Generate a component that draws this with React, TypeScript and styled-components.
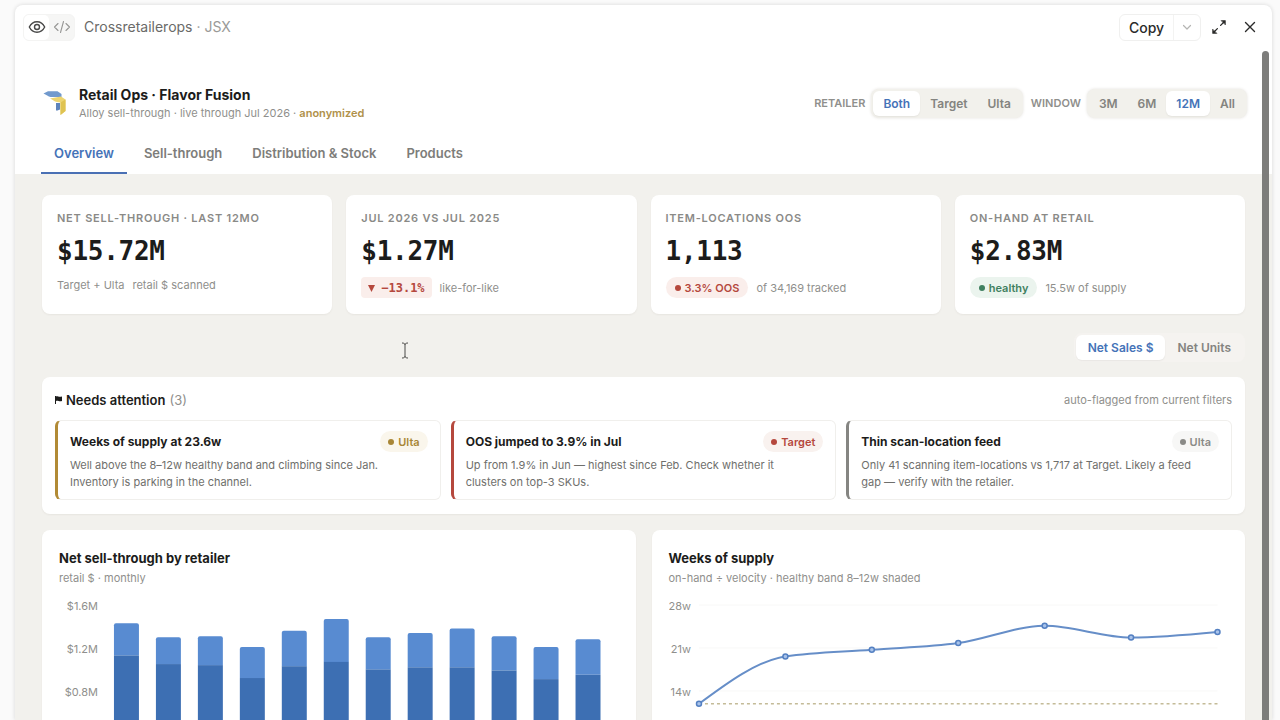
import React from "react";
import styled, { createGlobalStyle, css } from "styled-components";

const SANS = `Inter, "Liberation Sans", sans-serif`;
const MONO = `"DejaVu Sans Mono", "Liberation Mono", monospace`;

const GlobalStyle = createGlobalStyle`
  *, *::before, *::after { box-sizing: border-box; }
  body { margin: 0; background: #fafafa; color: #1c1c1b; font-family: ${SANS}; }
  button { font-family: inherit; border: 0; padding: 0; background: none; cursor: pointer; }
  h1, h2, h3, p { margin: 0; }
`;

const Page = styled.div`
  height: 100vh;
  padding: 5px 8px 0 15px;
  overflow: hidden;
`;

const Window = styled.div`
  position: relative;
  height: 100%;
  display: flex;
  flex-direction: column;
  background: #fff;
  border-radius: 8px 8px 0 0;
  box-shadow: 0 0 4px rgba(0, 0, 0, 0.14);
  overflow: hidden;
`;

const Toolbar = styled.div`
  flex: none;
  display: flex;
  align-items: center;
  height: 44px;
  padding: 0 12px 0 8px;
`;

const ViewToggle = styled.div`
  display: flex;
  align-items: center;
  height: 27px;
  width: 52px;
  border-radius: 6px;
  background: #f6f6f5;
  border: 1px solid #f4f4f3;
`;

const ViewButton = styled.button<{ $active?: boolean }>`
  flex: 1;
  display: flex;
  align-items: center;
  justify-content: center;
  height: 25px;
  border-radius: 5px;
  color: ${(p) => (p.$active ? "#4a4a49" : "#979795")};
  background: ${(p) => (p.$active ? "#fff" : "transparent")};
`;

const FileName = styled.div`
  flex: 1;
  margin-left: 9px;
  font-size: 14px;
  line-height: 20px;
  color: #6a6a68;
  span { color: #9a9a98; }
`;

const CopyGroup = styled.div`
  display: flex;
  height: 27px;
  border: 1px solid #f0f0ef;
  border-radius: 6px;
`;

const CopyButton = styled.button`
  width: 53px;
  font-size: 14px;
  font-weight: 500;
  color: #2b2b2a;
`;

const CopyMenu = styled.button`
  display: flex;
  align-items: center;
  justify-content: center;
  width: 27px;
  border-left: 1px solid #f3f3f2;
  color: #b5b5b3;
`;

const IconButton = styled.button`
  display: flex;
  align-items: center;
  justify-content: center;
  width: 20px;
  height: 24px;
  margin-left: 8px;
  color: #2b2b2a;
  & + & { margin-left: 11px; }
`;

const Scroller = styled.div`
  flex: 1;
  min-height: 0;
  overflow-y: auto;
  scrollbar-width: none;
`;

const ScrollThumb = styled.div`
  position: absolute;
  top: 46px;
  right: 3px;
  bottom: 0;
  width: 7px;
  border-radius: 4px 4px 0 0;
  background: #7d7d7b;
`;

const Header = styled.header`
  padding: 37px 25px 0 27px;
  background: #fff;
`;

const HeaderRow = styled.div`
  display: flex;
  align-items: center;
  justify-content: space-between;
  height: 34px;
`;

const Brand = styled.div`
  display: flex;
  align-items: center;
  gap: 12px;
`;

const BrandTitle = styled.h1`
  font-size: 14px;
  line-height: 20px;
  font-weight: 700;
`;

const BrandSub = styled.p`
  font-size: 11px;
  line-height: 16px;
  color: #8f8f8c;
  strong { font-weight: 600; color: #b0914a; }
`;

const Filters = styled.div`
  display: flex;
  align-items: center;
  gap: 8px;
`;

const Filter = styled.div`
  display: flex;
  align-items: center;
  gap: 6px;
`;

const FilterLabel = styled.span`
  font-size: 11px;
  font-weight: 600;
  color: #8f8f8c;
`;

const Segmented = styled.div`
  display: flex;
  padding: 2px;
  border-radius: 8px;
  background: #f2f1ec;
  box-shadow: 0 0 3px rgba(80, 70, 40, 0.16);
`;

const Segment = styled.button<{ $active?: boolean; $wide?: boolean }>`
  height: 25px;
  padding: 0 ${(p) => (p.$wide ? 12 : 10)}px;
  border-radius: 6px;
  font-size: 12px;
  font-weight: 600;
  color: #848480;
  ${(p) =>
    p.$active &&
    css`
      color: #4573b8;
      background: #fff;
      box-shadow: 0 1px 2px rgba(0, 0, 0, 0.06);
    `}
`;

const Tabs = styled.nav`
  display: flex;
  gap: 4px;
  margin: 12px -1px 0;
`;

const Tab = styled.button<{ $active?: boolean }>`
  height: 42px;
  padding: 2px 13px 0;
  font-size: 13px;
  font-weight: 600;
  color: ${(p) => (p.$active ? "#4573b8" : "#7d7d7a")};
  border-bottom: 2px solid ${(p) => (p.$active ? "#4a70b4" : "transparent")};
`;

const Body = styled.main`
  display: flex;
  flex-direction: column;
  padding: 21px 27px 24px;
  background: #f2f1ed;
`;

const Card = styled.section`
  background: #fff;
  border-radius: 8px;
  box-shadow: 0 1px 2px rgba(60, 50, 30, 0.06);
`;

const KpiGrid = styled.div`
  display: grid;
  grid-template-columns: repeat(4, 1fr);
  gap: 14px;
`;

const KpiCard = styled(Card)`
  min-height: 119px;
  padding: 15px;
`;

const KpiLabel = styled.h2`
  font-size: 11px;
  line-height: 16px;
  font-weight: 600;
  letter-spacing: 0.07em;
  text-transform: uppercase;
  color: #8a8a87;
`;

const KpiValue = styled.p`
  margin-top: 7px;
  font-family: ${MONO};
  font-size: 26px;
  line-height: 36px;
  font-weight: 700;
  letter-spacing: -0.01em;
`;

const KpiFoot = styled.div`
  display: flex;
  align-items: center;
  gap: 8px;
  margin-top: 8px;
  font-size: 11px;
  line-height: 16px;
  color: #8f8f8c;
`;

const tones = {
  red: { fg: "#b5483d", bg: "#faeeeb" },
  green: { fg: "#3f8060", bg: "#ebf4ee" },
  gold: { fg: "#a88636", bg: "#faf6ec" },
  rose: { fg: "#b5483d", bg: "#f9f2ef" },
  grey: { fg: "#8a8a87", bg: "#f7f7f6" },
};
type Tone = keyof typeof tones;

const Pill = styled.span<{ $tone: Tone }>`
  flex: none;
  display: inline-flex;
  align-items: center;
  gap: 4px;
  height: 21px;
  padding: 0 8px;
  border-radius: 11px;
  font-size: 11px;
  font-weight: 600;
  color: ${(p) => tones[p.$tone].fg};
  background: ${(p) => tones[p.$tone].bg};
  &::before {
    content: "";
    width: 6px;
    height: 6px;
    border-radius: 50%;
    background: currentColor;
  }
`;

const KpiPill = styled(Pill)`
  padding: 0 9px;
`;

const DeltaPill = styled.span`
  display: inline-flex;
  align-items: center;
  gap: 6px;
  height: 21px;
  padding: 0 7px;
  border-radius: 4px;
  font-family: ${MONO};
  font-size: 12px;
  font-weight: 700;
  color: ${tones.red.fg};
  background: ${tones.red.bg};
`;

const MeasureRow = styled.div`
  display: flex;
  justify-content: flex-end;
  margin: 19px 0 15px;
`;

const MeasureToggle = styled(Segmented)`
  background: #f5f3f0;
  box-shadow: none;
`;

const Attention = styled(Card)`
  padding: 13px 13px 14px;
`;

const AttentionHead = styled.div`
  display: flex;
  align-items: center;
  justify-content: space-between;
  height: 19px;
  font-size: 11px;
  color: #8f8f8c;
`;

const AttentionTitle = styled.h2`
  display: flex;
  align-items: center;
  gap: 4px;
  font-size: 13px;
  font-weight: 600;
  color: #1c1c1b;
  span { font-weight: 400; color: #8f8f8c; }
`;

const AlertGrid = styled.div`
  display: grid;
  grid-template-columns: repeat(3, 1fr);
  gap: 10px;
  margin-top: 11px;
`;

const Alert = styled.article<{ $edge: string }>`
  padding: 10px 12px 8px;
  border: 1px solid #f0efec;
  border-left: 3px solid ${(p) => p.$edge};
  border-radius: 6px;
`;

const AlertHead = styled.div`
  display: flex;
  align-items: center;
  justify-content: space-between;
`;

const AlertTitle = styled.h3`
  font-size: 12px;
  font-weight: 700;
`;

const AlertText = styled.p`
  max-width: 332px;
  margin-top: 5px;
  font-size: 11px;
  line-height: 17px;
  color: #6f6f6c;
`;

const ChartGrid = styled.div`
  display: grid;
  grid-template-columns: repeat(2, 1fr);
  gap: 16px;
  margin-top: 16px;
`;

const ChartCard = styled(Card)`
  padding: 18px 17px;
`;

const ChartTitle = styled.h2`
  font-size: 13px;
  line-height: 20px;
  font-weight: 700;
`;

const ChartSub = styled.p`
  margin-top: 2px;
  font-size: 11px;
  line-height: 16px;
  color: #8f8f8c;
`;

const ChartSvg = styled.svg`
  display: block;
  width: 100%;
  height: auto;
  margin-top: 11px;
  text {
    font-family: ${SANS};
    font-size: 11px;
    fill: #8f8f8c;
  }
`;

const TextCursor = styled.svg`
  position: absolute;
  left: 386px;
  top: 337px;
`;

const GRID_TOP = 8;
const GRID_STEP = 43;
const GRID_BASE = GRID_TOP + GRID_STEP * 4;

/* Monthly totals and the Target share, in $M. */
const sales = [
  [1.43, 1.13], [1.3, 1.05], [1.31, 1.04], [1.21, 0.92], [1.36, 1.03], [1.47, 1.07],
  [1.3, 1.0], [1.34, 1.02], [1.38, 1.02], [1.31, 0.99], [1.21, 0.91], [1.28, 0.95],
];

const supply = [11.9, 19.6, 20.7, 21.8, 24.6, 22.7, 23.6];

const yMoney = (v: number) => GRID_BASE - (v / 1.6) * GRID_STEP * 4;
const yWeeks = (v: number) => GRID_BASE - (v / 28) * GRID_STEP * 4;

/* Monotone cubic through evenly spaced points. */
function smoothPath(pts: number[][]) {
  const n = pts.length;
  const dx = pts[1][0] - pts[0][0];
  const slopes = pts.slice(1).map((p, i) => (p[1] - pts[i][1]) / dx);
  const tangents = pts.map((_, i) => {
    if (i === 0 || i === n - 1) return 0;
    const a = slopes[i - 1];
    const b = slopes[i];
    return a * b <= 0 ? 0 : Math.sign(a) * Math.min(Math.abs(a), Math.abs(b), Math.abs(a + b) / 4) * 2;
  });
  tangents[0] = (3 * slopes[0] - tangents[1]) / 2;
  tangents[n - 1] = (3 * slopes[n - 2] - tangents[n - 2]) / 2;
  return pts.slice(1).reduce((d, p, i) => {
    const q = pts[i];
    return `${d} C${q[0] + dx / 3},${q[1] + (tangents[i] * dx) / 3} ${p[0] - dx / 3},${p[1] - (tangents[i + 1] * dx) / 3} ${p[0]},${p[1]}`;
  }, `M${pts[0][0]},${pts[0][1]}`);
}

function SalesChart() {
  return (
    <ChartSvg viewBox="0 0 560 200" role="img" aria-label="Net sell-through by retailer">
      {["$1.6M", "$1.2M", "$0.8M"].map((t, i) => (
        <text key={t} x={39} y={GRID_TOP + i * GRID_STEP + 5} textAnchor="end">{t}</text>
      ))}
      {sales.map(([total, target], i) => {
        const x = 55 + i * 42;
        const top = yMoney(total);
        const split = yMoney(target);
        return (
          <g key={i}>
            <path d={`M${x},${split} V${top + 2} q0,-2 2,-2 h21 q2,0 2,2 V${split} Z`} fill="#588bd1" />
            <rect x={x} y={split} width={25} height={GRID_BASE - split} fill="#3d6fb3" />
          </g>
        );
      })}
    </ChartSvg>
  );
}

function SupplyChart() {
  const pts = supply.map((v, i) => [30 + i * (519 / 6), yWeeks(v)]);
  return (
    <ChartSvg viewBox="0 0 560 200" role="img" aria-label="Weeks of supply">
      {["28w", "21w", "14w"].map((t, i) => (
        <g key={t}>
          <line x1={30} x2={549} y1={GRID_TOP + i * GRID_STEP} y2={GRID_TOP + i * GRID_STEP} stroke="#f8f8f7" />
          <text x={22} y={GRID_TOP + i * GRID_STEP + 5} textAnchor="end">{t}</text>
        </g>
      ))}
      <line x1={30} x2={549} y1={yWeeks(11.9)} y2={yWeeks(11.9)} stroke="#c4bb98" strokeWidth={1.5} strokeDasharray="3 3" />
      <path d={smoothPath(pts)} fill="none" stroke="#668ec8" strokeWidth={2} />
      {pts.map(([x, y]) => (
        <circle key={x} cx={x} cy={y} r={2.5} fill="#a9c3ea" stroke="#5480c2" strokeWidth={1.5} />
      ))}
    </ChartSvg>
  );
}

const stroke = {
  fill: "none",
  stroke: "currentColor",
  strokeWidth: 1.4,
  strokeLinecap: "round",
  strokeLinejoin: "round",
} as const;

const EyeIcon = () => (
  <svg width="18" height="18" viewBox="0 0 18 18" {...stroke}>
    <path d="M1.3 9C3 5.6 5.7 3.8 9 3.8S15 5.6 16.7 9C15 12.4 12.3 14.2 9 14.2S3 12.4 1.3 9Z" />
    <circle cx="9" cy="9" r="2.5" />
  </svg>
);

const CodeIcon = () => (
  <svg width="18" height="18" viewBox="0 0 18 18" {...stroke} strokeWidth={1.1}>
    <path d="M5 5.5 1.5 9 5 12.5M13 5.5 16.5 9 13 12.5M10.5 3.5 7.5 14.5" />
  </svg>
);

const ChevronIcon = () => (
  <svg width="10" height="10" viewBox="0 0 10 10" {...stroke} strokeWidth={1.2}>
    <path d="M1.5 3.5 5 7 8.5 3.5" />
  </svg>
);

const ExpandIcon = () => (
  <svg width="16" height="16" viewBox="0 0 16 16" {...stroke} strokeWidth={1.3}>
    <path d="M9.6 6.4 13 3M6.4 9.6 3 13" />
    <path d="M10.4 1.600H14.400V5.600ZM5.600 14.400H1.600V10.400Z" fill="currentColor" strokeWidth={0.6} />
  </svg>
);

const CloseIcon = () => (
  <svg width="12" height="12" viewBox="0 0 12 12" {...stroke}>
    <path d="M1.5 1.5 10.5 10.5M10.5 1.5 1.5 10.5" />
  </svg>
);

const BrandMark = () => (
  <svg width="25" height="28" viewBox="0 0 25 28">
    <path d="M1.5 4.5 6 2.2H15.5L19.500 5V8H8.500C6.500 7.500 4 5.500 1.500 4.500Z" fill="#7199cd" />
    <path d="M8 9.500 19 7.500 23.500 10.500V22L18.500 26V13.500L15 13C12 12.500 11 10.500 8 9.500Z" fill="#ecd470" />
    <path d="M18.500 13.500 23.500 10.500V22L18.500 26Z" fill="#dfc352" />
    <path d="M14 14H18V20.500L15.500 21.500H14Z" fill="#5d83bb" />
  </svg>
);

const FlagIcon = () => (
  <svg width="7" height="9" viewBox="0 0 7 9" fill="#1c1c1b">
    <path d="M0 1H1V9H0ZM1 1.500C2.500 .8 3.500 2.400 7 1.600V6C4 6.800 3 5.200 1 6Z" />
  </svg>
);

const DownIcon = () => (
  <svg width="7" height="8" viewBox="0 0 7 8" fill="currentColor">
    <path d="M0 1H7L3.500 8Z" />
  </svg>
);

const kpis: { label: string; value: string; foot: React.ReactNode }[] = [
  { label: "Net sell-through · last 12mo", value: "$15.72M", foot: <><span>Target + Ulta</span><span>retail $ scanned</span></> },
  { label: "Jul 2026 vs Jul 2025", value: "$1.27M", foot: <><DeltaPill><DownIcon />−13.1%</DeltaPill><span>like-for-like</span></> },
  { label: "Item-locations OOS", value: "1,113", foot: <><KpiPill $tone="red">3.3% OOS</KpiPill><span>of 34,169 tracked</span></> },
  { label: "On-hand at retail", value: "$2.83M", foot: <><KpiPill $tone="green">healthy</KpiPill><span>15.5w of supply</span></> },
];

const alerts: { title: string; tag: string; tone: Tone; edge: string; text: string }[] = [
  { title: "Weeks of supply at 23.6w", tag: "Ulta", tone: "gold", edge: "#b18a35", text: "Well above the 8–12w healthy band and climbing since Jan. Inventory is parking in the channel." },
  { title: "OOS jumped to 3.9% in Jul", tag: "Target", tone: "rose", edge: "#b5483d", text: "Up from 1.9% in Jun — highest since Feb. Check whether it clusters on top-3 SKUs." },
  { title: "Thin scan-location feed", tag: "Ulta", tone: "grey", edge: "#858582", text: "Only 41 scanning item-locations vs 1,717 at Target. Likely a feed gap — verify with the retailer." },
];

export default function App() {
  return (
    <Page>
      <GlobalStyle />
      <Window>
        <Toolbar>
          <ViewToggle>
            <ViewButton $active aria-label="Preview"><EyeIcon /></ViewButton>
            <ViewButton aria-label="Code"><CodeIcon /></ViewButton>
          </ViewToggle>
          <FileName>Crossretailerops <span>· JSX</span></FileName>
          <CopyGroup>
            <CopyButton>Copy</CopyButton>
            <CopyMenu aria-label="More copy options"><ChevronIcon /></CopyMenu>
          </CopyGroup>
          <IconButton aria-label="Expand"><ExpandIcon /></IconButton>
          <IconButton aria-label="Close"><CloseIcon /></IconButton>
        </Toolbar>
        <Scroller>
          <Header>
            <HeaderRow>
              <Brand>
                <BrandMark />
                <div>
                  <BrandTitle>Retail Ops · Flavor Fusion</BrandTitle>
                  <BrandSub>Alloy sell-through · live through Jul 2026 · <strong>anonymized</strong></BrandSub>
                </div>
              </Brand>
              <Filters>
                <Filter>
                  <FilterLabel id="retailer">RETAILER</FilterLabel>
                  <Segmented role="group" aria-labelledby="retailer">
                    <Segment $active>Both</Segment>
                    <Segment>Target</Segment>
                    <Segment>Ulta</Segment>
                  </Segmented>
                </Filter>
                <Filter>
                  <FilterLabel id="window">WINDOW</FilterLabel>
                  <Segmented role="group" aria-labelledby="window">
                    <Segment>3M</Segment>
                    <Segment>6M</Segment>
                    <Segment $active>12M</Segment>
                    <Segment>All</Segment>
                  </Segmented>
                </Filter>
              </Filters>
            </HeaderRow>
            <Tabs>
              <Tab $active>Overview</Tab>
              <Tab>Sell-through</Tab>
              <Tab>Distribution &amp; Stock</Tab>
              <Tab>Products</Tab>
            </Tabs>
          </Header>
          <Body>
            <KpiGrid>
              {kpis.map((k) => (
                <KpiCard key={k.label}>
                  <KpiLabel>{k.label}</KpiLabel>
                  <KpiValue>{k.value}</KpiValue>
                  <KpiFoot>{k.foot}</KpiFoot>
                </KpiCard>
              ))}
            </KpiGrid>
            <MeasureRow>
              <MeasureToggle role="group" aria-label="Measure">
                <Segment $active $wide>Net Sales $</Segment>
                <Segment $wide>Net Units</Segment>
              </MeasureToggle>
            </MeasureRow>
            <Attention>
              <AttentionHead>
                <AttentionTitle><FlagIcon />Needs attention <span>(3)</span></AttentionTitle>
                <span>auto-flagged from current filters</span>
              </AttentionHead>
              <AlertGrid>
                {alerts.map((a) => (
                  <Alert key={a.title} $edge={a.edge}>
                    <AlertHead>
                      <AlertTitle>{a.title}</AlertTitle>
                      <Pill $tone={a.tone}>{a.tag}</Pill>
                    </AlertHead>
                    <AlertText>{a.text}</AlertText>
                  </Alert>
                ))}
              </AlertGrid>
            </Attention>
            <ChartGrid>
              <ChartCard>
                <ChartTitle>Net sell-through by retailer</ChartTitle>
                <ChartSub>retail $ · monthly</ChartSub>
                <SalesChart />
              </ChartCard>
              <ChartCard>
                <ChartTitle>Weeks of supply</ChartTitle>
                <ChartSub>on-hand ÷ velocity · healthy band 8–12w shaded</ChartSub>
                <SupplyChart />
              </ChartCard>
            </ChartGrid>
          </Body>
        </Scroller>
        <ScrollThumb />
        <TextCursor width="8" height="17" viewBox="0 0 8 17" fill="none" stroke="#4a4a48">
          <path d="M1 1C3 1 4 1.500 4 3V14C4 15.500 3 16 1 16M7 1C5 1 4 1.500 4 3M7 16C5 16 4 15.500 4 14" />
        </TextCursor>
      </Window>
    </Page>
  );
}
